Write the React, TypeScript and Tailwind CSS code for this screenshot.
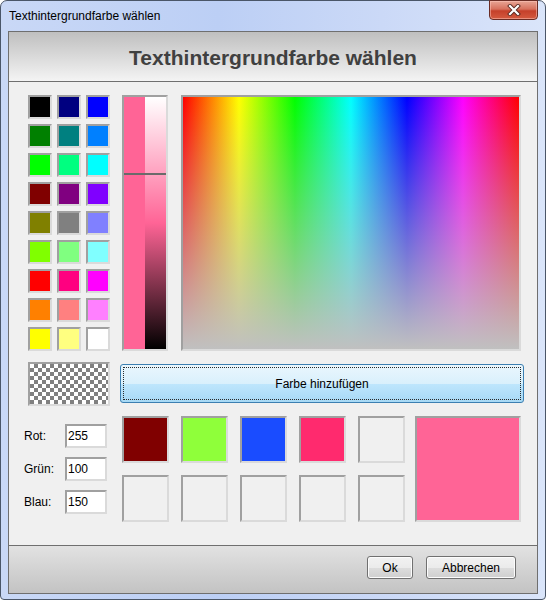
import React from 'react';

const sunken = 'border-2 border-t-[#a0a0a0] border-l-[#a0a0a0] border-r-[#dadada] border-b-[#dadada]';

const basic = [
  '#000000', '#000080', '#0000ff',
  '#008000', '#008080', '#0080ff',
  '#00ff00', '#00ff80', '#00ffff',
  '#800000', '#800080', '#8000ff',
  '#808000', '#808080', '#8080ff',
  '#80ff00', '#80ff80', '#80ffff',
  '#ff0000', '#ff0080', '#ff00ff',
  '#ff8000', '#ff8080', '#ff80ff',
  '#ffff00', '#ffff80', '#ffffff',
];

const custom = ['#800000', '#8fff3a', '#1a4cff', '#ff2a6e', '#f0f0f0', '#f0f0f0', '#f0f0f0', '#f0f0f0', '#f0f0f0', '#f0f0f0'];

const CloseIcon = () => (
  <svg width="14" height="12" viewBox="0 0 14 12">
    <path d="M3 2 L11 10 M11 2 L3 10" stroke="#5a2a22" strokeWidth="4" strokeLinecap="square" />
    <path d="M3 2 L11 10 M11 2 L3 10" stroke="#ffffff" strokeWidth="2.2" strokeLinecap="square" />
  </svg>
);

const RgbField = ({ label, value }: { label: string; value: string }) => (
  <div className="flex items-center h-[24px]">
    <span className="w-[41px] text-[12px] text-black">{label}</span>
    <div className={`w-[42px] h-[24px] bg-white ${sunken} flex items-center pl-[1px] text-[12px] text-black`}>{value}</div>
  </div>
);

const WinButton = ({ children, width }: { children: React.ReactNode; width: string }) => (
  <button className={`${width} h-[23px] rounded-[3px] border border-[#707070] bg-[linear-gradient(to_bottom,#f2f2f2_0%,#ebebeb_50%,#dddddd_51%,#cfcfcf_100%)] text-[12px] text-black shadow-[inset_0_0_0_1px_#fcfcfc]`}>
    {children}
  </button>
);

export default function App() {
  return (
    <div className="w-[546px] h-[600px] font-['Liberation_Sans',Arial,sans-serif] bg-white">
      <div className="relative w-[546px] h-[600px] rounded-t-[7px] rounded-b-[4px] border border-[#4a5668] bg-[linear-gradient(to_right,#c9d8f6,#bccff5_40%,#cbd9f7_70%,#dae5fa)] px-[7px] flex flex-col">
        {/* title bar */}
        <div className="h-[30px] flex items-center pl-[1px] text-[12px] text-black shrink-0">
          Texthintergrundfarbe wählen
        </div>
        <div className="absolute top-[-1px] right-[7px] w-[49px] h-[20px] rounded-b-[4px] border border-[#6a2c24] bg-[linear-gradient(to_bottom,#e8a595_0%,#d7715d_45%,#c5402a_55%,#d45a3f_100%)] flex items-center justify-center shadow-[inset_0_0_0_1px_rgba(255,200,190,0.5)]">
          <CloseIcon />
        </div>

        {/* client */}
        <div className="flex flex-col border border-[#6f6f6f] bg-[#f0f0f0]">
          <div className="h-[50px] border-b border-[#6f6f6f] bg-[linear-gradient(to_bottom,#bfbfbf,#f4f4f4)] flex items-center justify-center">
            <span className="text-[21px] font-bold text-[#404040] pt-[2px]">Texthintergrundfarbe wählen</span>
          </div>

          <div className="h-[463px] pl-[19px] pt-[13px]">
            {/* row A */}
            <div className="flex items-start h-[256px]">
              <div className="grid grid-cols-3 gap-[5px] w-[82px]">
                {basic.map((c, i) => (
                  <div key={i} className={`w-[24px] h-[24px] ${sunken}`}>
                    <div className="w-full h-full" style={{ backgroundColor: c }} />
                  </div>
                ))}
              </div>
              <div className={`relative ml-[12px] w-[46px] h-[256px] ${sunken} flex`}>
                <div className="w-[21px] h-full bg-[#ff6496]" />
                <div className="flex-1 h-full bg-[linear-gradient(to_bottom,#ffffff_0%,#ff6496_50%,#000000_100%)]" />
                <div className="absolute left-0 right-0 top-[76px] h-[2px] bg-[#6a6a6a]" />
              </div>
              <div className={`ml-[13px] w-[340px] h-[256px] ${sunken}`}>
                <div className="w-full h-full bg-[linear-gradient(to_right,#ff0000_0%,#ffff00_16.67%,#00ff00_33.33%,#00ffff_50%,#0000ff_66.67%,#ff00ff_83.33%,#ff0000_100%)]">
                  <div className="w-full h-full bg-[linear-gradient(to_bottom,rgba(192,192,192,0)_0%,rgba(192,192,192,1)_100%)]" />
                </div>
              </div>
            </div>

            {/* row B */}
            <div className="flex items-start mt-[11px] h-[44px]">
              <div className={`w-[82px] h-[44px] ${sunken}`}>
                <div className="w-full h-full bg-[repeating-conic-gradient(#808080_0_25%,#ffffff_0_50%)] bg-[length:8px_8px]" />
              </div>
              <button className="ml-[10px] mt-[2px] w-[404px] h-[39px] rounded-[3px] border border-[#3c7fb1] bg-[linear-gradient(to_bottom,#eaf6fd_0%,#d9f0fc_50%,#bee6fd_51%,#a7d9f5_100%)] p-[2px]">
                <div className="w-full h-full border border-dotted border-[#2a2a2a] flex items-center justify-center text-[12px] text-black">
                  Farbe hinzufügen
                </div>
              </button>
            </div>

            {/* row C */}
            <div className="flex items-start mt-[10px]">
              <div className="ml-[-4px] w-[98px] pt-[8px] flex flex-col gap-[9px]">
                <RgbField label="Rot:" value="255" />
                <RgbField label="Grün:" value="100" />
                <RgbField label="Blau:" value="150" />
              </div>
              <div className="grid grid-cols-5 gap-[12px]">
                {custom.map((c, i) => (
                  <div key={i} className={`w-[47px] h-[47px] ${sunken}`}>
                    <div className="w-full h-full" style={{ backgroundColor: c }} />
                  </div>
                ))}
              </div>
              <div className={`ml-[10px] w-[106px] h-[106px] ${sunken}`}>
                <div className="w-full h-full bg-[#ff6496]" />
              </div>
            </div>
          </div>

          <div className="h-[48px] border-t border-[#6f6f6f] bg-[linear-gradient(to_bottom,#e2e2e2,#c3c3c3)] flex items-start justify-end pt-[10px] pr-[21px] gap-[13px]">
            <WinButton width="w-[46px]">Ok</WinButton>
            <WinButton width="w-[90px]">Abbrechen</WinButton>
          </div>
        </div>
      </div>
    </div>
  );
}
